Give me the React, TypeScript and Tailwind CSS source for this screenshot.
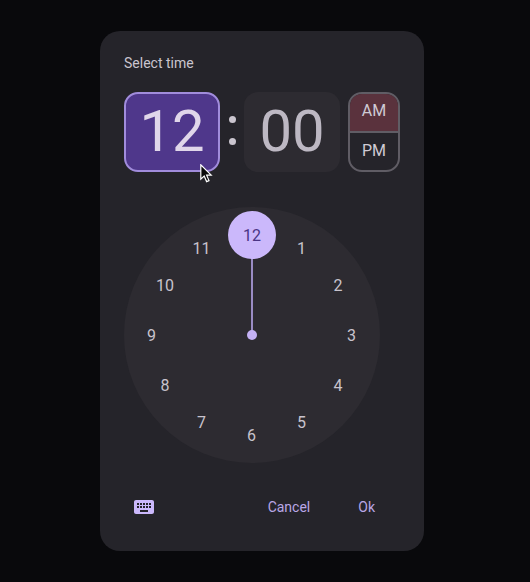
import React from "react";

const HOURS = [12, 1, 2, 3, 4, 5, 6, 7, 8, 9, 10, 11];

const Cursor: React.FC = () => (
  <svg
    className="absolute left-[76px] top-[72px]"
    width="14"
    height="20"
    viewBox="0 0 14 20"
  >
    <path
      d="M0.8 0.8V15.2L4.2 12L6.6 17.6L9 16.6L6.6 11.2H11.2Z"
      fill="#0a0a0a"
      stroke="#ffffff"
      strokeWidth="1.2"
      strokeLinejoin="miter"
    />
  </svg>
);

const Dial: React.FC = () => (
  <div className="relative h-64 w-64 rounded-full bg-[#2d2b31]">
    {HOURS.map((hour, i) => {
      const angle = (i * Math.PI) / 6;
      const x = 127.5 + Math.sin(angle) * 100;
      const y = 129 - Math.cos(angle) * 100;
      if (hour === 12) return null;
      return (
        <span
          key={hour}
          className="absolute flex h-6 w-6 -translate-x-1/2 -translate-y-1/2 items-center justify-center text-base text-[#c8c3cd]"
          style={{ left: x, top: y }}
        >
          {hour}
        </span>
      );
    })}
    <div className="absolute left-[127px] top-[28px] h-[100px] w-0.5 bg-[#9a8cc4]" />
    <div className="absolute left-[123px] top-[123px] h-2.5 w-2.5 rounded-full bg-[#c4b1f5]" />
    <div className="absolute left-[104px] top-1 flex h-12 w-12 items-center justify-center rounded-full bg-[#cbb8fb] pt-px text-base text-[#4a3585]">
      12
    </div>
  </div>
);

export default function App() {
  return (
    <div className="min-h-screen bg-[#09090c] pl-[100px] pt-[31px] font-['Roboto',sans-serif]">
      <div className="flex h-[520px] w-[324px] flex-col rounded-[20px] bg-[#25242a] px-6 pt-6">
        <p className="h-4 text-sm leading-4 text-[#cac5cf]">Select time</p>

        <div className="relative mt-[21px] flex h-20 w-[276px]">
          <div className="flex h-20 w-24 items-center justify-center rounded-[14px] border-2 border-[#a18cdc] bg-[#4f378b] pb-0.5 text-[58px] leading-none text-[#e0d6ea]">
            12
          </div>
          <div className="flex w-6 flex-col items-center justify-center gap-[15px] pb-1">
            <span className="h-[7px] w-[7px] rounded-full bg-[#cac5cf]" />
            <span className="h-[7px] w-[7px] rounded-full bg-[#cac5cf]" />
          </div>
          <div className="flex h-20 w-24 items-center justify-center rounded-[14px] bg-[#2d2b31] pb-0.5 text-[58px] leading-none text-[#bdb8c3]">
            00
          </div>
          <div className="ml-2 flex h-20 w-[52px] flex-col overflow-hidden rounded-[14px] border-2 border-[#605d65] text-base text-[#cfcad4]">
            <div className="flex h-[39px] items-center justify-center border-b-2 border-[#605d65] bg-[#5a323d] pb-1">
              AM
            </div>
            <div className="flex flex-1 items-center justify-center pb-0.5">PM</div>
          </div>
          <Cursor />
        </div>

        <div className="mt-[35px] w-64">
          <Dial />
        </div>

        <div className="mt-6 flex h-10 w-[276px] items-center text-sm text-[#b9a7e6]">
          <svg className="ml-2 h-6 w-6 text-[#cbb8fb]" viewBox="0 0 24 24" fill="currentColor">
            <path d="M20 5H4c-1.1 0-2 .9-2 2v10c0 1.1.9 2 2 2h16c1.1 0 2-.9 2-2V7c0-1.1-.9-2-2-2zm-9 3h2v2h-2V8zm0 3h2v2h-2v-2zM8 8h2v2H8V8zm0 3h2v2H8v-2zM5 11h2v2H5v-2zm0-3h2v2H5V8zm11 9H8v-2h8v2zm0-4h-2v-2h2v2zm0-3h-2V8h2v2zm3 3h-2v-2h2v2zm0-3h-2V8h2v2z" />
          </svg>
          <span className="ml-auto">Cancel</span>
          <span className="ml-[48px] mr-[25px]">Ok</span>
        </div>
      </div>
    </div>
  );
}
